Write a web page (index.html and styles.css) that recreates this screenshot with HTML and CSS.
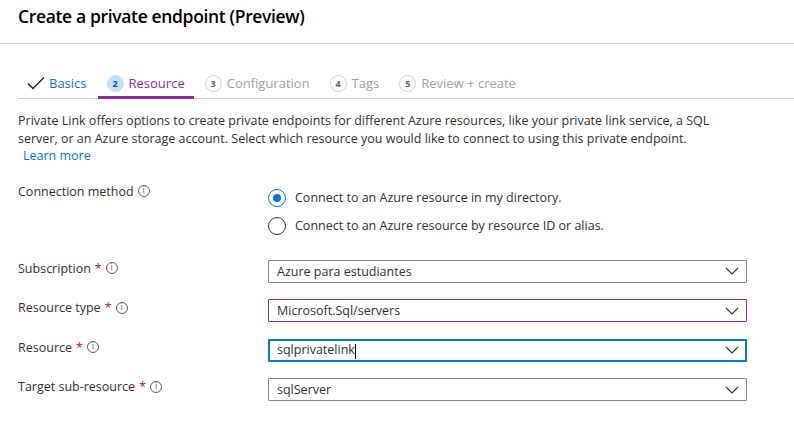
FILE: index.html
```html
<!DOCTYPE html>
<html lang="en">
<head>
<meta charset="utf-8">
<title>Create a private endpoint (Preview)</title>
<link rel="stylesheet" href="styles.css">
</head>
<body>
<header class="header">
  <h1 class="title">Create a private endpoint (Preview)</h1>
</header>
<nav class="tabs">
  <div class="tab done">
    <svg class="check" width="18" height="14" viewBox="0 0 18 14"><path d="M1 7.5 L6 12.5 L17 1.5" fill="none" stroke="#201f1e" stroke-width="1.4"/></svg>
    <span class="tab-label">Basics</span>
  </div>
  <div class="tab active">
    <span class="step">2</span>
    <span class="tab-label">Resource</span>
  </div>
  <div class="tab">
    <span class="step">3</span>
    <span class="tab-label">Configuration</span>
  </div>
  <div class="tab">
    <span class="step">4</span>
    <span class="tab-label">Tags</span>
  </div>
  <div class="tab">
    <span class="step">5</span>
    <span class="tab-label">Review + create</span>
  </div>
</nav>
<main class="content">
  <p class="intro">Private Link offers options to create private endpoints for different Azure resources, like your private link service, a SQL server, or an Azure storage account. Select which resource you would like to connect to using this private endpoint.<br><a class="link" href="#">Learn more</a></p>

  <div class="row row-radio">
    <div class="label">Connection method <span class="info">i</span></div>
    <div class="radios">
      <label class="radio checked"><span class="dot"></span>Connect to an Azure resource in my directory.</label>
      <label class="radio"><span class="dot"></span>Connect to an Azure resource by resource ID or alias.</label>
    </div>
  </div>

  <div class="row">
    <div class="label">Subscription <span class="req">*</span> <span class="info">i</span></div>
    <div class="select">Azure para estudiantes<svg class="chev" width="14" height="8" viewBox="0 0 14 8"><path d="M1 1 L7 7 L13 1" fill="none" stroke="#323130" stroke-width="1.1"/></svg></div>
  </div>
  <div class="row">
    <div class="label">Resource type <span class="req">*</span> <span class="info">i</span></div>
    <div class="select hover">Microsoft.Sql/servers<svg class="chev" width="14" height="8" viewBox="0 0 14 8"><path d="M1 1 L7 7 L13 1" fill="none" stroke="#323130" stroke-width="1.1"/></svg></div>
  </div>
  <div class="row">
    <div class="label">Resource <span class="req">*</span> <span class="info">i</span></div>
    <div class="select focus"><span>sqlprivatelink<span class="caret"></span></span><svg class="chev" width="14" height="8" viewBox="0 0 14 8"><path d="M1 1 L7 7 L13 1" fill="none" stroke="#323130" stroke-width="1.1"/></svg></div>
  </div>
  <div class="row">
    <div class="label">Target sub-resource <span class="req">*</span> <span class="info">i</span></div>
    <div class="select">sqlServer<svg class="chev" width="14" height="8" viewBox="0 0 14 8"><path d="M1 1 L7 7 L13 1" fill="none" stroke="#323130" stroke-width="1.1"/></svg></div>
  </div>
</main>
</body>
</html>
```

FILE: styles.css
```css
* { box-sizing: border-box; }
html, body { margin: 0; padding: 0; background: #fff; }
body {
  font-family: "Open Sans", "Noto Sans", "Liberation Sans", sans-serif;
  font-size: 12.5px;
  color: #323130;
  width: 794px;
  height: 432px;
  overflow: hidden;
}
.header {
  height: 44px;
  border-bottom: 1px solid #d2d0ce;
  padding: 3px 0 0 18px;
}
.title {
  margin: 0;
  font-size: 17.5px;
  letter-spacing: -0.35px;
  font-weight: 600;
  color: #000;
  line-height: 26px;
}
.tabs {
  display: flex;
  align-items: center;
  gap: 2px;
  margin: 24px 0 0 18px;
  height: 31px;
  border-bottom: 1px solid #d2d0ce;
}
.tab {
  display: flex;
  align-items: center;
  height: 100%;
  padding: 0 9px;
  color: #a19f9d;
  font-size: 13px;
  position: relative;
}
.tab.done { color: #0078d4; }
.tab.done .check { margin-right: 4px; }
.tab.active { color: #8a2da5; }
.tab.active::after {
  content: "";
  position: absolute;
  left: 0; right: 0; bottom: -1px;
  height: 3px;
  background: #8a2da5;
}
.step {
  width: 17px;
  height: 17px;
  border-radius: 50%;
  border: 1px solid #d2d0ce;
  font-size: 9px;
  font-weight: 700;
  color: #605e5c;
  display: flex;
  align-items: center;
  justify-content: center;
  margin-right: 5px;
}
.tab.active .step {
  background: #c7e0f4;
  border-color: #c7e0f4;
  color: #005a9e;
}
.content { padding: 0 0 0 18px; }
.intro {
  margin: 13px 0 0 0;
  line-height: 17.5px;
  width: 715px;
}
.link { color: #0078d4; text-decoration: none; margin-left: 5px; }
.row {
  display: flex;
  align-items: flex-start;
  margin-top: 16.5px;
}
.row-radio { margin-top: 18px; margin-bottom: 20px; }
.label {
  width: 250px;
  line-height: 17px;
  display: flex;
  align-items: center;
  gap: 4px;
}
.req { color: #a4262c; }
.info {
  display: inline-flex;
  align-items: center;
  justify-content: center;
  width: 12px;
  height: 12px;
  border: 1px solid #605e5c;
  border-radius: 50%;
  font-size: 8px;
  line-height: 1;
  color: #605e5c;
  font-family: "DejaVu Sans", sans-serif;
}
.radios { display: flex; flex-direction: column; margin-top: 1px; }
.radio {
  display: flex;
  align-items: center;
  height: 28px;
}
.dot {
  width: 18px;
  height: 18px;
  border-radius: 50%;
  border: 1px solid #323130;
  margin-right: 9px;
  display: flex;
  align-items: center;
  justify-content: center;
}
.radio.checked .dot { border-color: #0078d4; }
.radio.checked .dot::after {
  content: "";
  width: 8px;
  height: 8px;
  border-radius: 50%;
  background: #0078d4;
}
.select {
  width: 479px;
  height: 23px;
  border: 1px solid #8a8886;
  border-radius: 1px;
  display: flex;
  align-items: center;
  justify-content: space-between;
  padding: 0 7px 0 8px;
  color: #323130;
}
.select.hover { border-color: #8a2da5; }
.select.focus { border: 2px solid #0078d4; padding: 0 6px 0 7px; }
.caret {
  display: inline-block;
  width: 1px;
  height: 15px;
  background: #000;
  vertical-align: middle;
  margin-left: 0;
}
.chev { flex: none; }
```
